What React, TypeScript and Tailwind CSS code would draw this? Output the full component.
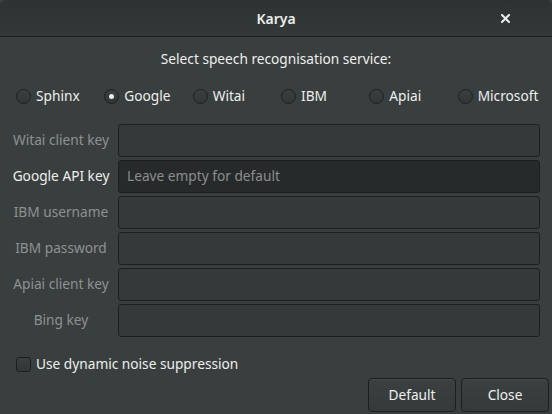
import React from "react";

const services = ["Sphinx", "Google", "Witai", "IBM", "Apiai", "Microsoft"];
const rows: { label: string; active?: boolean; placeholder?: string }[] = [
  { label: "Witai client key" },
  { label: "Google API key", active: true, placeholder: "Leave empty for default" },
  { label: "IBM username" },
  { label: "IBM password" },
  { label: "Apiai client key" },
  { label: "Bing key" },
];

export default function App() {
  return (
    <div
      className="w-[552px] h-[414px] overflow-hidden bg-[#393f3f] text-[#eeeeec] text-[13.7px]"
      style={{ fontFamily: '"Noto Sans", "DejaVu Sans", sans-serif' }}
    >
      {/* title bar */}
      <div className="relative h-[37px] rounded-t-[6px] bg-gradient-to-b from-[#2d3232] to-[#333838] border-b border-[#1c1f1f] flex items-center justify-center">
        <span className="font-semibold text-[14px] text-[#eeeeec]">Karya</span>
        <svg className="absolute left-[501px] top-[14px]" width="9" height="9" viewBox="0 0 9 9">
          <path d="M1 1 L8 8 M8 1 L1 8" stroke="#eeeeec" strokeWidth="2" strokeLinecap="square" />
        </svg>
      </div>

      {/* body */}
      <div className="flex flex-col">
        <div className="mt-[12px] h-[20px] flex items-center justify-center">
          Select speech recognisation service:
        </div>

        <div className="mt-[17px] h-[20px] ml-[16px] w-[530px] grid grid-cols-6">
          {services.map((s) => (
            <div key={s} className="flex items-center gap-[5px]">
              <div className="w-[15px] h-[15px] rounded-full border border-[#1c1f1f] bg-gradient-to-b from-[#3a4040] to-[#313636] flex items-center justify-center">
                {s === "Google" && <div className="w-[5px] h-[5px] rounded-full bg-[#eeeeec]" />}
              </div>
              <span>{s}</span>
            </div>
          ))}
        </div>

        <div className="mt-[18px] flex flex-col gap-[3px]">
          {rows.map((r) => (
            <div key={r.label} className="flex h-[33px]">
              <div
                className={`w-[118px] pl-[10px] pr-[6px] flex items-center justify-center ${
                  r.active ? "text-[#eeeeec]" : "text-[#8e9192]"
                }`}
              >
                {r.label}
              </div>
              <div
                className={`w-[422px] h-[33px] rounded-[3px] border border-[#1c1f1f] flex items-center px-[8px] ${
                  r.active ? "bg-[#272a2a]" : "bg-[#343a3a]"
                }`}
              >
                {r.placeholder && <span className="text-[#8b8e8f]">{r.placeholder}</span>}
              </div>
            </div>
          ))}
        </div>

        <div className="mt-[17px] h-[20px] ml-[16px] flex items-center gap-[5px]">
          <div className="w-[15px] h-[15px] rounded-[3px] border border-[#1c1f1f] bg-gradient-to-b from-[#3a4040] to-[#313636]" />
          <span>Use dynamic noise suppression</span>
        </div>

        <div className="mt-[4px] flex justify-end gap-[5px] pr-[3px]">
          {["Default", "Close"].map((b) => (
            <div
              key={b}
              className="w-[88px] h-[34px] rounded-[4px] border border-[#1c1f1f] bg-gradient-to-b from-[#3b4141] to-[#343a3a] flex items-center justify-center shadow-[inset_0_1px_0_rgba(255,255,255,0.04)]"
            >
              {b}
            </div>
          ))}
        </div>
      </div>
    </div>
  );
}
